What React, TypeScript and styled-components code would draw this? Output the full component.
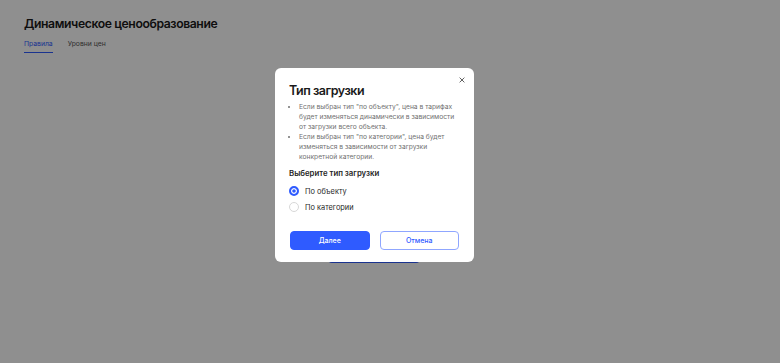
import { createGlobalStyle, styled } from "styled-components";

const GlobalStyle = createGlobalStyle`
  html, body {
    margin: 0;
    padding: 0;
    background: #ffffff;
    font-family: Inter, "Noto Sans", sans-serif;
    color: #1f1f1f;
  }
  * {
    box-sizing: border-box;
  }
`;

const App = () => {
  return (
    <>
      <GlobalStyle />
      <Page>
        <Title>Динамическое ценообразование</Title>
        <Tabs>
          <Tab $active>Правила</Tab>
          <Tab>Уровни цен</Tab>
        </Tabs>
        <Content>
          <PageButton>Добавить правило</PageButton>
        </Content>
      </Page>
      <Overlay>
        <Modal>
          <CloseButton aria-label="Закрыть">
            <svg width="6" height="6" viewBox="0 0 10 10">
              <path
                d="M1.5 1.5 L8.5 8.5 M8.5 1.5 L1.5 8.5"
                stroke="#444"
                strokeWidth="1.4"
                strokeLinecap="round"
              />
            </svg>
          </CloseButton>
          <ModalTitle>Тип загрузки</ModalTitle>
          <Hints>
            <li>
              Если выбран тип "по объекту", цена в тарифах будет изменяться
              динамически в зависимости от загрузки всего объекта.
            </li>
            <li>
              Если выбран тип "по категории", цена будет изменяться в
              зависимости от загрузки конкретной категории.
            </li>
          </Hints>
          <SectionTitle>Выберите тип загрузки</SectionTitle>
          <RadioGroup>
            <RadioRow>
              <Radio $checked />
              По объекту
            </RadioRow>
            <RadioRow>
              <Radio />
              По категории
            </RadioRow>
          </RadioGroup>
          <Actions>
            <ActionButton $primary>Далее</ActionButton>
            <ActionButton>Отмена</ActionButton>
          </Actions>
        </Modal>
      </Overlay>
    </>
  );
};

const Page = styled.div`
  height: 363px;
  padding: 16px 24px 0;
  display: flex;
  flex-direction: column;
`;

const Title = styled.h1`
  margin: 0;
  font-size: 12.2px;
  line-height: 16px;
  font-weight: 600;
  letter-spacing: -0.4px;
  color: #1a1a1a;
`;

const Tabs = styled.div`
  display: flex;
  gap: 15px;
  margin-top: 7px;
`;

const Tab = styled.div<{ $active?: boolean }>`
  font-size: 6.8px;
  line-height: 10px;
  padding-bottom: 3px;
  color: ${(p) => (p.$active ? "#2f5bff" : "#555")};
  border-bottom: 1.5px solid ${(p) => (p.$active ? "#2f5bff" : "transparent")};
`;

const Content = styled.div`
  flex: 1;
  display: flex;
  justify-content: center;
  padding-top: 191px;
  padding-right: 32px;
`;

const PageButton = styled.button`
  width: 92px;
  height: 19px;
  border: none;
  border-radius: 4px;
  background: #2f5bff;
  color: #fff;
  font-family: inherit;
  font-size: 7.5px;
`;

const Overlay = styled.div`
  position: fixed;
  inset: 0;
  background: rgba(0, 0, 0, 0.44);
  display: flex;
  align-items: flex-start;
  justify-content: center;
  padding-top: 68px;
  padding-right: 31px;
`;

const Modal = styled.div`
  position: relative;
  width: 199px;
  height: 194px;
  background: #fff;
  border-radius: 6px;
  padding: 15px 15px 0 14px;
  display: flex;
  flex-direction: column;
`;

const CloseButton = styled.button`
  position: absolute;
  top: 6px;
  right: 7px;
  width: 11px;
  height: 11px;
  padding: 0;
  border: none;
  background: none;
  display: flex;
  align-items: center;
  justify-content: center;
`;

const ModalTitle = styled.h2`
  margin: 0;
  font-size: 12.5px;
  line-height: 16px;
  font-weight: 600;
  letter-spacing: -0.5px;
  color: #1a1a1a;
`;

const Hints = styled.ul`
  margin: 3px 0 0;
  padding-left: 10px;
  font-size: 6.7px;
  line-height: 9.8px;
  color: #707070;
  li::marker {
    font-size: 6px;
  }
`;

const SectionTitle = styled.div`
  margin-top: 5px;
  font-size: 7.8px;
  line-height: 11px;
  font-weight: 600;
  color: #1f1f1f;
`;

const RadioGroup = styled.div`
  display: flex;
  flex-direction: column;
  gap: 5px;
  margin-top: 7px;
`;

const RadioRow = styled.label`
  display: flex;
  align-items: center;
  gap: 6px;
  font-size: 7.4px;
  line-height: 11px;
  color: #1f1f1f;
`;

const Radio = styled.span<{ $checked?: boolean }>`
  width: 10px;
  height: 10px;
  border-radius: 50%;
  border: ${(p) => (p.$checked ? "2.5px solid #2f5bff" : "1px solid #d8d8d8")};
  background: ${(p) => (p.$checked ? "#2f5bff" : "#fff")};
  box-shadow: ${(p) => (p.$checked ? "inset 0 0 0 1.2px #fff" : "none")};
`;

const Actions = styled.div`
  display: grid;
  grid-template-columns: 1fr 1fr;
  gap: 10px;
  margin-top: auto;
  margin-bottom: 12px;
  padding-left: 1px;
`;

const ActionButton = styled.button<{ $primary?: boolean }>`
  height: 19px;
  border-radius: 4px;
  font-family: inherit;
  font-size: 7px;
  font-weight: 500;
  background: ${(p) => (p.$primary ? "#2f5bff" : "#fff")};
  color: ${(p) => (p.$primary ? "#fff" : "#2f5bff")};
  border: 1px solid ${(p) => (p.$primary ? "#2f5bff" : "#8fa6ff")};
`;

export default App;
